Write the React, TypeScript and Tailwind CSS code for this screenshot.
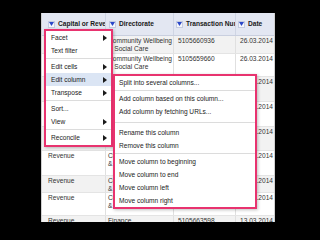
import React from 'react';

const cols = [
  { title: 'Capital or Revenue', w: 'w-[64px]', hpad: 'pl-[6px]', dpad: 'pl-[6px]' },
  { title: 'Directorate', w: 'w-[68px]', hpad: 'pl-[3px]', dpad: 'pl-[2px]' },
  { title: 'Transaction Number', w: 'w-[62px]', hpad: 'pl-[2px]', dpad: 'pl-[4px]' },
  { title: 'Date', w: 'w-[40px]', hpad: 'pl-[2px]', dpad: 'pl-[4px]' },
];

const rows = [
  { h: 18, cells: ['Revenue', 'Community Wellbeing & Social Care', '5105660936', '26.03.2014'] },
  { h: 23, cells: ['Revenue', 'Community Wellbeing & Social Care', '5105659660', '26.03.2014'] },
  { h: 25, cells: ['Revenue', 'Children, Young People & Learning', '5105661267', '27.03.2014'] },
  { h: 25, cells: ['Revenue', 'Children, Young People & Learning', '5105661802', '27.03.2014'] },
  { h: 24, cells: ['Revenue', 'Children, Young People & Learning', '5105662011', '28.03.2014'] },
  { h: 25, cells: ['Revenue', 'Children, Young People & Learning', '5105662230', '28.03.2014'] },
  { h: 17, cells: ['Revenue', 'Community Wellbeing & Social Care', '5105662487', '31.03.2014'] },
  { h: 23, cells: ['Revenue', 'Community Wellbeing & Social Care', '5105662945', '31.03.2014'] },
  { h: 14, cells: ['Revenue', 'Finance & Resources', '5105663598', '13.03.2014'] },
];

function Arrow() {
  return (
    <svg width="4" height="6" viewBox="0 0 4 6" className="shrink-0">
      <path d="M0 0 L4 3 L0 6 Z" fill="#1a1a1a" />
    </svg>
  );
}

function DropButton() {
  return (
    <div className="w-[7px] h-[7px] shrink-0 flex items-center justify-center bg-[#f4f6fb] border border-[#c4cbe0]">
      <svg width="5" height="4" viewBox="0 0 5 4">
        <path d="M0 0 L5 0 L2.5 4 Z" fill="#2a47c8" />
      </svg>
    </div>
  );
}

type Item = { label?: string; sub?: boolean; active?: boolean; sep?: boolean; gap?: boolean };

const mainMenu: Item[] = [
  { label: 'Facet', sub: true },
  { label: 'Text filter' },
  { sep: true },
  { label: 'Edit cells', sub: true },
  { label: 'Edit column', sub: true, active: true },
  { label: 'Transpose', sub: true },
  { sep: true },
  { label: 'Sort...' },
  { label: 'View', sub: true },
  { sep: true },
  { label: 'Reconcile', sub: true },
];

const subMenu: Item[] = [
  { label: 'Split into several columns...' },
  { sep: true },
  { label: 'Add column based on this column...' },
  { label: 'Add column by fetching URLs...' },
  { gap: true },
  { label: 'Rename this column' },
  { label: 'Remove this column' },
  { sep: true },
  { label: 'Move column to beginning' },
  { label: 'Move column to end' },
  { label: 'Move column left' },
  { label: 'Move column right' },
];

function Menu({ items, pad }: { items: Item[]; pad: string }) {
  return (
    <div className="flex flex-col">
      {items.map((it, i) => {
        if (it.sep) return <div key={i} className="h-[3px] flex items-center"><div className="w-full h-px bg-[#dcdcdc]" /></div>;
        if (it.gap) return <div key={i} className="h-[8px] flex items-end pb-[3px]"><div className="w-full h-px bg-[#dcdcdc]" /></div>;
        return (
          <div key={i} className={`h-[13px] flex items-center justify-between ${pad} pr-[4px] ${it.active ? 'bg-[#dbe5f4]' : ''}`}>
            <span className="whitespace-nowrap">{it.label}</span>
            {it.sub && <Arrow />}
          </div>
        );
      })}
    </div>
  );
}

export default function App() {
  return (
    <div className="w-[320px] h-[240px] bg-black relative overflow-hidden text-[6.6px] text-[#222]" style={{ fontFamily: '"Liberation Sans", Arial, sans-serif' }}>
      <div className="absolute left-[41px] top-[13px] w-[234px] h-[209px] bg-white overflow-hidden flex flex-col border-x border-[#d0d0d0]">
        <div className="h-[23px] shrink-0 flex bg-[#e3e7f2] border-b border-[#c9cfdf]">
          {cols.map((c, i) => (
            <div key={i} className={`${c.w} shrink-0 flex items-center gap-[3px] ${c.hpad} overflow-hidden border-r border-[#cfd5e4]`}>
              <DropButton />
              <span className="font-bold whitespace-nowrap text-[#1a1a1a]">{c.title}</span>
            </div>
          ))}
        </div>
        {rows.map((r, ri) => (
          <div key={ri} className={`shrink-0 flex border-b border-[#e4e4e4] ${ri % 2 === 0 ? 'bg-[#f2f2f2]' : 'bg-white'}`} style={{ height: r.h }}>
            {r.cells.map((t, ci) => (
              <div key={ci} className={`${cols[ci].w} shrink-0 ${cols[ci].dpad} pt-[1px] leading-[8px] overflow-hidden border-r border-[#e0e0e0] text-[#333]`}>
                {ci === 1 ? (
                  <div className="whitespace-nowrap">
                    {t.includes('&') ? (
                      <>
                        <div>{t.split(' & ')[0]}</div>
                        <div>& {t.split(' & ')[1]}</div>
                      </>
                    ) : t}
                  </div>
                ) : (
                  <span className="whitespace-nowrap">{t}</span>
                )}
              </div>
            ))}
          </div>
        ))}
      </div>

      <div className="absolute left-[44px] top-[29px] w-[69px] bg-white border-2 border-[#e8336f] pt-0 pb-[1px] shadow-[1px_1px_3px_rgba(0,0,0,0.25)]">
        <Menu items={mainMenu} pad="pl-[5px]" />
      </div>

      <div className="absolute left-[113px] top-[74px] w-[144px] bg-white border-2 border-[#e8336f] pb-[0px] shadow-[1px_1px_3px_rgba(0,0,0,0.25)]">
        <Menu items={subMenu} pad="pl-[4px]" />
      </div>
    </div>
  );
}
